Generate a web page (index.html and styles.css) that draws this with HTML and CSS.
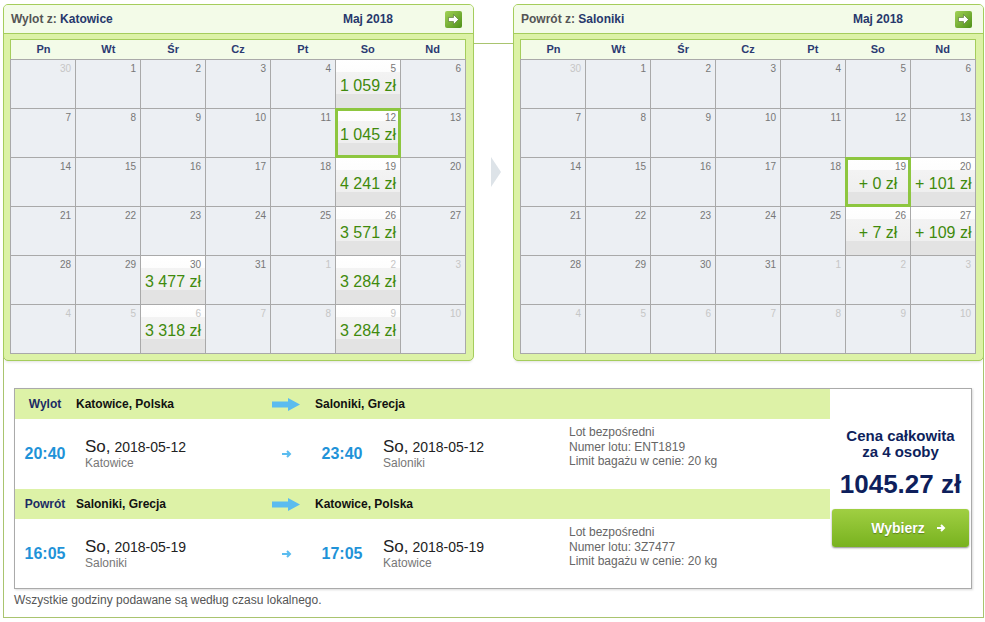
FILE: index.html
```html
<!DOCTYPE html>
<html lang="pl">
<head>
    <meta charset="UTF-8">
    <meta name="viewport" content="width=device-width, initial-scale=1.0">
    <title>Wybór lotu</title>
    <link rel="stylesheet" href="styles.css">
</head>
<body>
    <div class="wrap">
        <div class="cals">
            <!-- wylot -->
            <div class="cal">
                <div class="cal-head">
                    <span class="cal-title">Wylot z: <b>Katowice</b></span>
                    <span class="cal-month">Maj 2018</span>
                    <svg class="next" width="17" height="17" viewBox="0 0 17 17"><defs><linearGradient id="nx1" x1="0" y1="0" x2="1" y2="1"><stop offset="0" stop-color="#a2d257"/><stop offset="1" stop-color="#4e9018"/></linearGradient></defs><rect width="17" height="17" rx="2" fill="url(#nx1)"/><path d="M3.5 6.5h5v-3l5 5-5 5v-3h-5z" fill="#fff" stroke="#4d6b2c" stroke-width=".6"/></svg>
                </div>
                <div class="cal-body">
                    <div class="week">
                        <span>Pn</span><span>Wt</span><span>Śr</span><span>Cz</span><span>Pt</span><span>So</span><span>Nd</span>
                    </div>
                    <div class="days">
                        <div class="day out"><span class="num">30</span></div>
                        <div class="day"><span class="num">1</span></div>
                        <div class="day"><span class="num">2</span></div>
                        <div class="day"><span class="num">3</span></div>
                        <div class="day"><span class="num">4</span></div>
                        <div class="day fare"><span class="num">5</span><span class="price">1 059 zł</span></div>
                        <div class="day"><span class="num">6</span></div>

                        <div class="day"><span class="num">7</span></div>
                        <div class="day"><span class="num">8</span></div>
                        <div class="day"><span class="num">9</span></div>
                        <div class="day"><span class="num">10</span></div>
                        <div class="day"><span class="num">11</span></div>
                        <div class="day fare sel"><span class="num">12</span><span class="price">1 045 zł</span></div>
                        <div class="day"><span class="num">13</span></div>

                        <div class="day"><span class="num">14</span></div>
                        <div class="day"><span class="num">15</span></div>
                        <div class="day"><span class="num">16</span></div>
                        <div class="day"><span class="num">17</span></div>
                        <div class="day"><span class="num">18</span></div>
                        <div class="day fare"><span class="num">19</span><span class="price">4 241 zł</span></div>
                        <div class="day"><span class="num">20</span></div>

                        <div class="day"><span class="num">21</span></div>
                        <div class="day"><span class="num">22</span></div>
                        <div class="day"><span class="num">23</span></div>
                        <div class="day"><span class="num">24</span></div>
                        <div class="day"><span class="num">25</span></div>
                        <div class="day fare"><span class="num">26</span><span class="price">3 571 zł</span></div>
                        <div class="day"><span class="num">27</span></div>

                        <div class="day"><span class="num">28</span></div>
                        <div class="day"><span class="num">29</span></div>
                        <div class="day fare"><span class="num">30</span><span class="price">3 477 zł</span></div>
                        <div class="day"><span class="num">31</span></div>
                        <div class="day out"><span class="num">1</span></div>
                        <div class="day fare out"><span class="num">2</span><span class="price">3 284 zł</span></div>
                        <div class="day out"><span class="num">3</span></div>

                        <div class="day out"><span class="num">4</span></div>
                        <div class="day out"><span class="num">5</span></div>
                        <div class="day fare out"><span class="num">6</span><span class="price">3 318 zł</span></div>
                        <div class="day out"><span class="num">7</span></div>
                        <div class="day out"><span class="num">8</span></div>
                        <div class="day fare out"><span class="num">9</span><span class="price">3 284 zł</span></div>
                        <div class="day out"><span class="num">10</span></div>
                    </div>
                </div>
            </div>

            <div class="gap"><span class="tri"></span></div>

            <!-- powrot -->
            <div class="cal">
                <div class="cal-head">
                    <span class="cal-title">Powrót z: <b>Saloniki</b></span>
                    <span class="cal-month">Maj 2018</span>
                    <svg class="next" width="17" height="17" viewBox="0 0 17 17"><defs><linearGradient id="nx2" x1="0" y1="0" x2="1" y2="1"><stop offset="0" stop-color="#a2d257"/><stop offset="1" stop-color="#4e9018"/></linearGradient></defs><rect width="17" height="17" rx="2" fill="url(#nx2)"/><path d="M3.5 6.5h5v-3l5 5-5 5v-3h-5z" fill="#fff" stroke="#4d6b2c" stroke-width=".6"/></svg>
                </div>
                <div class="cal-body">
                    <div class="week">
                        <span>Pn</span><span>Wt</span><span>Śr</span><span>Cz</span><span>Pt</span><span>So</span><span>Nd</span>
                    </div>
                    <div class="days">
                        <div class="day out"><span class="num">30</span></div>
                        <div class="day"><span class="num">1</span></div>
                        <div class="day"><span class="num">2</span></div>
                        <div class="day"><span class="num">3</span></div>
                        <div class="day"><span class="num">4</span></div>
                        <div class="day"><span class="num">5</span></div>
                        <div class="day"><span class="num">6</span></div>

                        <div class="day"><span class="num">7</span></div>
                        <div class="day"><span class="num">8</span></div>
                        <div class="day"><span class="num">9</span></div>
                        <div class="day"><span class="num">10</span></div>
                        <div class="day"><span class="num">11</span></div>
                        <div class="day"><span class="num">12</span></div>
                        <div class="day"><span class="num">13</span></div>

                        <div class="day"><span class="num">14</span></div>
                        <div class="day"><span class="num">15</span></div>
                        <div class="day"><span class="num">16</span></div>
                        <div class="day"><span class="num">17</span></div>
                        <div class="day"><span class="num">18</span></div>
                        <div class="day fare sel"><span class="num">19</span><span class="price">+ 0 zł</span></div>
                        <div class="day fare"><span class="num">20</span><span class="price">+ 101 zł</span></div>

                        <div class="day"><span class="num">21</span></div>
                        <div class="day"><span class="num">22</span></div>
                        <div class="day"><span class="num">23</span></div>
                        <div class="day"><span class="num">24</span></div>
                        <div class="day"><span class="num">25</span></div>
                        <div class="day fare"><span class="num">26</span><span class="price">+ 7 zł</span></div>
                        <div class="day fare"><span class="num">27</span><span class="price">+ 109 zł</span></div>

                        <div class="day"><span class="num">28</span></div>
                        <div class="day"><span class="num">29</span></div>
                        <div class="day"><span class="num">30</span></div>
                        <div class="day"><span class="num">31</span></div>
                        <div class="day out"><span class="num">1</span></div>
                        <div class="day out"><span class="num">2</span></div>
                        <div class="day out"><span class="num">3</span></div>

                        <div class="day out"><span class="num">4</span></div>
                        <div class="day out"><span class="num">5</span></div>
                        <div class="day out"><span class="num">6</span></div>
                        <div class="day out"><span class="num">7</span></div>
                        <div class="day out"><span class="num">8</span></div>
                        <div class="day out"><span class="num">9</span></div>
                        <div class="day out"><span class="num">10</span></div>
                    </div>
                </div>
            </div>
        </div>

        <!-- wybrany lot -->
        <div class="trip">
            <div class="legs">
                <div class="leg-head">
                    <span class="lbl">Wylot</span>
                    <span class="city">Katowice, Polska</span>
                    <svg class="big-arrow" width="28" height="13" viewBox="0 0 28 13"><polygon points="0,3.5 16,3.5 16,0 28,6.5 16,13 16,9.5 0,9.5" fill="#5bbcef"/></svg>
                    <span class="city">Saloniki, Grecja</span>
                </div>
                <div class="leg">
                    <span class="time">20:40</span>
                    <div class="when">
                        <div class="date"><span class="wd">So,</span> 2018-05-12</div>
                        <div class="place">Katowice</div>
                    </div>
                    <span class="hop"><svg width="10" height="8" viewBox="0 0 10 8"><path d="M0 4h8M5 1l3 3-3 3" fill="none" stroke="#5bbcef" stroke-width="2"/></svg></span>
                    <span class="time time2">23:40</span>
                    <div class="when when2">
                        <div class="date"><span class="wd">So,</span> 2018-05-12</div>
                        <div class="place">Saloniki</div>
                    </div>
                    <div class="info">
                        Lot bezpośredni<br>
                        Numer lotu: ENT1819<br>
                        Limit bagażu w cenie: 20 kg
                    </div>
                </div>
                <div class="leg-head">
                    <span class="lbl">Powrót</span>
                    <span class="city">Saloniki, Grecja</span>
                    <svg class="big-arrow" width="28" height="13" viewBox="0 0 28 13"><polygon points="0,3.5 16,3.5 16,0 28,6.5 16,13 16,9.5 0,9.5" fill="#5bbcef"/></svg>
                    <span class="city">Katowice, Polska</span>
                </div>
                <div class="leg last">
                    <span class="time">16:05</span>
                    <div class="when">
                        <div class="date"><span class="wd">So,</span> 2018-05-19</div>
                        <div class="place">Saloniki</div>
                    </div>
                    <span class="hop"><svg width="10" height="8" viewBox="0 0 10 8"><path d="M0 4h8M5 1l3 3-3 3" fill="none" stroke="#5bbcef" stroke-width="2"/></svg></span>
                    <span class="time time2">17:05</span>
                    <div class="when when2">
                        <div class="date"><span class="wd">So,</span> 2018-05-19</div>
                        <div class="place">Katowice</div>
                    </div>
                    <div class="info">
                        Lot bezpośredni<br>
                        Numer lotu: 3Z7477<br>
                        Limit bagażu w cenie: 20 kg
                    </div>
                </div>
            </div>
            <div class="total">
                <div class="total-label">Cena całkowita<br>za 4 osoby</div>
                <div class="total-price">1045.27 zł</div>
                <button class="choose">Wybierz <svg width="9" height="8" viewBox="0 0 9 8"><path d="M0 4h7M4 1l3 3-3 3" fill="none" stroke="#fff" stroke-width="2"/></svg></button>
            </div>
        </div>
        <p class="note">Wszystkie godziny podawane są według czasu lokalnego.</p>
    </div>
</body>
</html>
```

FILE: styles.css
```css
* {
    box-sizing: border-box;
}
body {
    margin: 0;
    background: #fff;
    font-family: "Liberation Sans", Arial, sans-serif;
    color: #333;
}
.wrap {
    width: 981px;
    height: 575px;
    margin: 43px 0 0 3px;
    border: 1px solid #a9c46f;
}

/* kalendarze */
.cals {
    display: flex;
    margin: -40px -1px 0 -1px;
}
.cal {
    width: 471px;
    border: 1px solid #a5cd5c;
    border-radius: 5px;
    background: #dcf2a6;
    box-shadow: 0 3px 3px -2px rgba(0, 0, 0, 0.12);
}
.cal-head {
    display: flex;
    align-items: center;
    height: 29px;
    padding: 0 11px 0 7px;
    background: #f3fbe8;
    border-bottom: 1px solid #a5cd5c;
    border-radius: 4px 4px 0 0;
    font-size: 12px;
    font-weight: bold;
}
.cal-title {
    color: #555;
}
.cal-title b {
    color: #27386c;
}
.cal-month {
    margin-left: auto;
    margin-right: 52px;
    color: #27386c;
}
.next {
    display: block;
}
.cal-body {
    padding: 5px 6px 6px 6px;
}
.week {
    display: grid;
    grid-template-columns: repeat(7, 1fr);
    width: 456px;
    height: 20px;
    background: #f3fbe8;
    border: 1px solid #a5cd5c;
    border-bottom: 0;
    font-size: 11px;
    font-weight: bold;
    line-height: 19px;
    color: #2b3a72;
    text-align: center;
}
.days {
    display: grid;
    grid-template-columns: repeat(7, 64px);
    grid-auto-rows: 48px;
    gap: 1px;
    width: 456px;
    background: #a9a9a9;
    border: 1px solid #a9a9a9;
}
.day {
    padding: 3px 4px 0;
    background: #eceff3;
}
.num {
    display: block;
    text-align: right;
    font-size: 10px;
    line-height: 12px;
    color: #777;
}
.out .num {
    color: #c6c6c6;
}
.fare {
    background: linear-gradient(#fff 0, #fdfdfd 25%, #f3f3f3 25%, #efefef 70%, #e3e3e3 70%, #e3e3e3 100%);
}
.price {
    display: block;
    margin-top: 2px;
    text-align: center;
    font-size: 16px;
    line-height: 18px;
    white-space: nowrap;
    color: #3f8a0c;
}
.sel {
    position: relative;
    z-index: 1;
    outline: 3px solid #8dc63f;
    outline-offset: -2px;
}
.gap {
    width: 39px;
    padding: 153px 0 0 17px;
}
.tri {
    display: block;
    width: 0;
    height: 0;
    border-left: 10px solid #dde3e8;
    border-top: 15px solid transparent;
    border-bottom: 15px solid transparent;
}

/* wybrany lot */
.trip {
    display: flex;
    width: 958px;
    margin: 27px 0 0 10px;
    border: 1px solid #aaa;
    box-shadow: 1px 1px 2px rgba(0, 0, 0, 0.15);
}
.legs {
    width: 815px;
}
.leg-head {
    display: flex;
    align-items: center;
    height: 30px;
    background: #ddf2a7;
    font-size: 12px;
    font-weight: bold;
    color: #111;
}
.lbl {
    width: 60px;
    text-align: center;
    color: #1c2b64;
}
.city {
    width: 197px;
    padding-left: 1px;
}
.big-arrow {
    margin-right: 14px;
}
.leg {
    display: flex;
    align-items: center;
    height: 70px;
}
.leg.last {
    height: 69px;
}
.time {
    width: 60px;
    text-align: center;
    font-size: 16px;
    font-weight: bold;
    color: #1f93d8;
}
.time2 {
    width: 80px;
}
.when {
    width: 187px;
    margin-left: 10px;
}
.when2 {
    width: 186px;
    margin-left: 1px;
}
.date {
    font-size: 14px;
    line-height: 18px;
    color: #222;
}
.wd {
    font-size: 17px;
}
.place {
    font-size: 12px;
    line-height: 14px;
    color: #777;
}
.hop {
    display: flex;
    justify-content: center;
    width: 30px;
}
.info {
    align-self: flex-start;
    padding-top: 6px;
    font-size: 12px;
    line-height: 14.5px;
    color: #666;
}
.total {
    display: flex;
    flex-direction: column;
    align-items: center;
    width: 141px;
    padding-top: 39px;
    color: #0e1f5c;
    font-weight: bold;
    text-align: center;
}
.total-label {
    font-size: 15px;
    line-height: 16px;
}
.total-price {
    margin-top: 9px;
    font-size: 26px;
    line-height: 30px;
}
.choose {
    display: flex;
    align-items: center;
    justify-content: center;
    gap: 12px;
    width: 137px;
    height: 38px;
    margin-top: 10px;
    padding: 0 0 0 16px;
    border: 0;
    border-radius: 3px;
    background: linear-gradient(#a0cf42, #78b21f);
    box-shadow: 0 1px 2px rgba(0, 0, 0, 0.45);
    font-family: inherit;
    font-size: 14px;
    font-weight: bold;
    color: #fff;
    text-shadow: 0 1px 1px rgba(0, 0, 0, 0.3);
    cursor: pointer;
}
.note {
    margin: 4px 0 0 10px;
    font-size: 12px;
    line-height: 14px;
    color: #555;
}
```
